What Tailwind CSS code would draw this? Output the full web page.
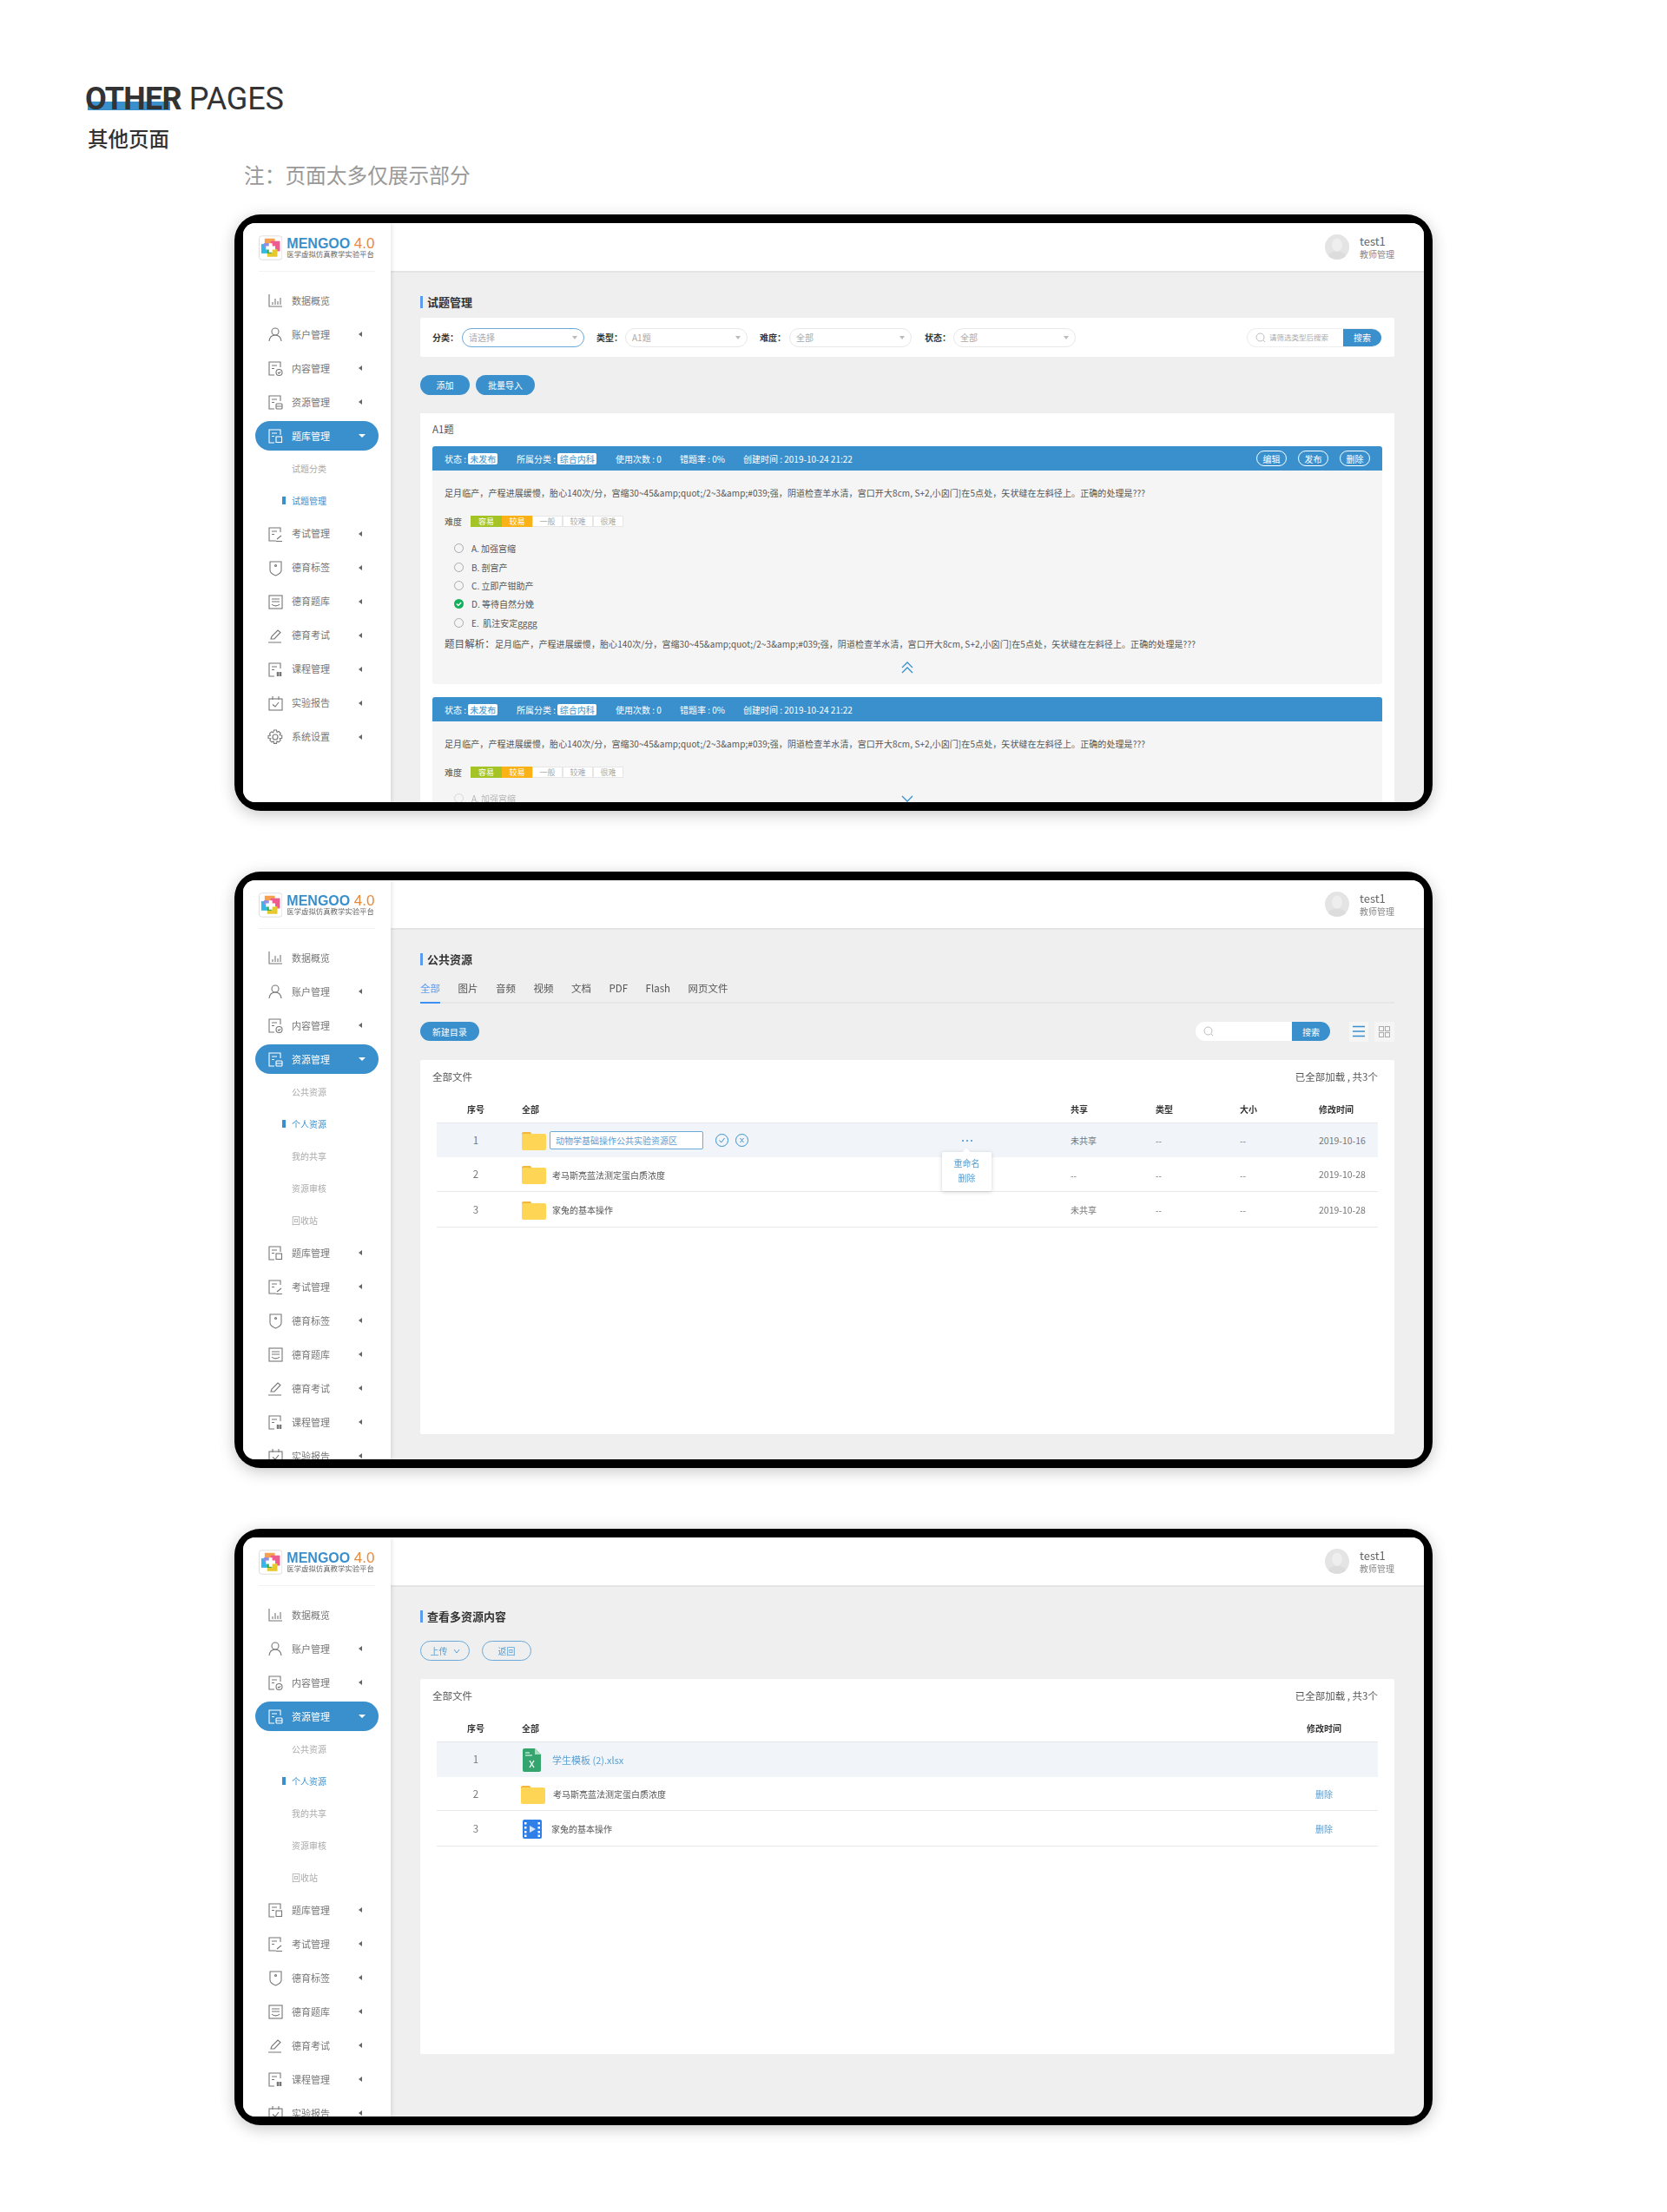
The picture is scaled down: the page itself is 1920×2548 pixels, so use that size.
<!DOCTYPE html>
<html lang="en">
<head>
<meta charset="UTF-8">
<title>Other pages</title>
<script src="https://cdn.jsdelivr.net/npm/@tailwindcss/browser@4"></script>
</head>
<body class="bg-white">
<div class="w-[1920px] h-[2548px] overflow-hidden font-['Noto_Sans_CJK_SC',sans-serif] text-[#555]">

  <!-- page heading -->
  <div class="h-[247px] pt-[92px] pl-[98px]">
    <div class="relative h-[44px] w-[300px] font-['Roboto',sans-serif] text-[36px] leading-[44px] text-[#333]">
      <div class="absolute left-[3px] top-[25px] w-[95px] h-[10px] bg-[#3a90cc]"></div>
      <span class="relative font-bold tracking-[-0.8px]">OTHER</span> <span class="relative tracking-[-0.2px]">PAGES</span>
    </div>
    <div class="ml-[3px] mt-[1px] text-[23.5px] leading-[44px] font-medium text-[#333]">其他页面</div>
    <div class="ml-[183px] -mt-[2px] text-[23.7px] leading-[44px] text-[#999]">注：页面太多仅展示部分</div>
  </div>

  <!-- question bank -->
  <div class="ml-[270px] w-[1380px] h-[687px] bg-black rounded-[30px] p-[10px] shadow-[0_4px_18px_rgba(0,0,0,0.22)]">
    <div class="flex h-full rounded-[14px] overflow-hidden bg-[#efefef] blur-[0.35px]">
      <div class="sidebar w-[170px] shrink-0 bg-white shadow-[1px_0_5px_rgba(0,0,0,0.12)] z-10" data-active="题库管理" data-subs="试题分类,试题管理" data-current="试题管理"></div>
      <div class="flex-1 min-w-0 flex flex-col">
        <div class="topbar"></div>
        <div class="relative flex-1 min-h-0 overflow-hidden px-[34px] pt-[27px]">
          <div class="h-[14px] border-l-[3px] border-[#5b9bf0] pl-[5px] text-[13px] leading-[14px] font-bold text-[#333]">试题管理</div>

          <div class="mt-[11px] h-[45px] bg-white rounded-[2px] flex items-center pl-[14px] text-[10px]">
            <span class="w-[34px] font-bold text-[#333]">分类：</span>
            <div class="w-[141px] h-[22px] mr-[14px] rounded-full border border-[#6aa9d8] flex items-center justify-between px-[7px] text-[#aaa]">请选择<i class="w-0 h-0 border-x-[3.5px] border-x-transparent border-t-[4px] border-t-[#bbb]"></i></div>
            <span class="w-[33px] font-bold text-[#333]">类型：</span>
            <div class="w-[141px] h-[22px] mr-[14px] rounded-full border border-[#e8e8e8] flex items-center justify-between px-[7px] text-[#aaa]">A1题<i class="w-0 h-0 border-x-[3.5px] border-x-transparent border-t-[4px] border-t-[#bbb]"></i></div>
            <span class="w-[34px] font-bold text-[#333]">难度：</span>
            <div class="w-[141px] h-[22px] mr-[15px] rounded-full border border-[#e8e8e8] flex items-center justify-between px-[7px] text-[#aaa]">全部<i class="w-0 h-0 border-x-[3.5px] border-x-transparent border-t-[4px] border-t-[#bbb]"></i></div>
            <span class="w-[33px] font-bold text-[#333]">状态：</span>
            <div class="w-[141px] h-[22px] rounded-full border border-[#e8e8e8] flex items-center justify-between px-[7px] text-[#aaa]">全部<i class="w-0 h-0 border-x-[3.5px] border-x-transparent border-t-[4px] border-t-[#bbb]"></i></div>
            <div class="ml-auto mr-[15px] w-[155px] h-[22px] flex rounded-full overflow-hidden border border-[#eee] border-r-0">
              <div class="flex-1 flex items-center pl-[9px] text-[8.5px] text-[#aaa]">
                <svg class="w-[12px] h-[12px] mr-[4px]" viewBox="0 0 12 12" fill="none" stroke="#bbb"><circle cx="5.5" cy="5.5" r="4.5"/><path d="M9 9l2 2"/></svg>请筛选类型后搜索
              </div>
              <div class="w-[44px] bg-[#3a90cc] text-white flex items-center justify-center">搜索</div>
            </div>
          </div>

          <div class="mt-[21px] flex gap-[7px] text-[10px] text-white">
            <div class="w-[57px] h-[23px] rounded-full bg-[#3a90cc] flex items-center justify-center">添加</div>
            <div class="w-[68px] h-[23px] rounded-full bg-[#3a90cc] flex items-center justify-center">批量导入</div>
          </div>

          <div class="mt-[21px] bg-white px-[14px] h-[500px]">
            <div class="h-[38px] flex items-center text-[11.5px] text-[#555]">A1题</div>

            <div class="qbar" data-actions="1"></div>
            <div class="h-[246px] bg-[#f5f5f5] rounded-b-[3px] px-[14px] pt-[16px] text-[10px] text-[#555]">
              <div class="h-[20px] leading-[20px] whitespace-nowrap tracking-[0.09px]">足月临产，产程进展缓慢，胎心140次/分，宫缩30~45&amp;amp;quot;/2~3&amp;amp;#039;强，阴道检查羊水清，宫口开大8cm, S+2,小囟门]在5点处，矢状缝在左斜径上。正确的处理是???</div>
              <div class="qlevel mt-[16px]"></div>
              <div class="mt-[14px]">
                <div class="h-[21.4px] flex items-center pl-[11px]"><i class="w-[11px] h-[11px] rounded-full border border-[#aaa] mr-[9px]"></i>A. 加强宫缩</div>
                <div class="h-[21.4px] flex items-center pl-[11px]"><i class="w-[11px] h-[11px] rounded-full border border-[#aaa] mr-[9px]"></i>B. 剖宫产</div>
                <div class="h-[21.4px] flex items-center pl-[11px]"><i class="w-[11px] h-[11px] rounded-full border border-[#aaa] mr-[9px]"></i>C. 立即产钳助产</div>
                <div class="h-[21.4px] flex items-center pl-[11px]">
                  <svg class="w-[11px] h-[11px] mr-[9px]" viewBox="0 0 11 11"><circle cx="5.5" cy="5.5" r="5.5" fill="#12b05c"/><path d="M2.8 5.6l2 2 3.4-3.6" fill="none" stroke="#fff" stroke-width="1.4"/></svg>D. 等待自然分娩</div>
                <div class="h-[21.4px] flex items-center pl-[11px]"><i class="w-[11px] h-[11px] rounded-full border border-[#aaa] mr-[9px]"></i>E.&nbsp; 肌注安定gggg</div>
              </div>
              <div class="mt-[3.5px] h-[20px] leading-[20px] whitespace-nowrap tracking-[0.09px]"><span class="text-[11.5px]">题目解析：</span>足月临产，产程进展缓慢，胎心140次/分，宫缩30~45&amp;amp;quot;/2~3&amp;amp;#039;强，阴道检查羊水清，宫口开大8cm, S+2,小囟门]在5点处，矢状缝在左斜径上。正确的处理是???</div>
              <svg class="block mx-auto mt-[11px] w-[14px] h-[14px]" viewBox="0 0 14 14" fill="none" stroke="#3a90cc" stroke-width="1.3"><path d="M1 7l6-6 6 6M1 13l6-6 6 6"/></svg>
            </div>

            <div class="mt-[15px] qbar"></div>
            <div class="relative h-[200px] bg-[#f5f5f5] px-[14px] pt-[16px] text-[10px]">
              <div class="h-[20px] leading-[20px] whitespace-nowrap tracking-[0.09px]">足月临产，产程进展缓慢，胎心140次/分，宫缩30~45&amp;amp;quot;/2~3&amp;amp;#039;强，阴道检查羊水清，宫口开大8cm, S+2,小囟门]在5点处，矢状缝在左斜径上。正确的处理是???</div>
              <div class="qlevel mt-[16px]"></div>
              <div class="mt-[13px] h-[21.4px] flex items-center pl-[11px] opacity-40"><i class="w-[11px] h-[11px] rounded-full border border-[#aaa] mr-[9px]"></i>A. 加强宫缩</div>
              <svg class="absolute left-[540px] top-[84px] w-[14px] h-[10px]" viewBox="0 0 14 10" fill="none" stroke="#3a90cc" stroke-width="1.3"><path d="M1 2l6 6 6-6"/></svg>
            </div>
          </div>
        </div>
      </div>
    </div>
  </div>

  <!-- public resources -->
  <div class="mt-[70px] ml-[270px] w-[1380px] h-[687px] bg-black rounded-[30px] p-[10px] shadow-[0_4px_18px_rgba(0,0,0,0.22)]">
    <div class="flex h-full rounded-[14px] overflow-hidden bg-[#efefef] blur-[0.35px]">
      <div class="sidebar w-[170px] shrink-0 bg-white shadow-[1px_0_5px_rgba(0,0,0,0.12)] z-10" data-active="资源管理" data-subs="公共资源,个人资源,我的共享,资源审核,回收站" data-current="个人资源"></div>
      <div class="flex-1 min-w-0 flex flex-col">
        <div class="topbar"></div>
        <div class="flex-1 min-h-0 overflow-hidden px-[34px] pt-[27px]">
          <div class="h-[14px] border-l-[3px] border-[#5b9bf0] pl-[5px] text-[13px] leading-[14px] font-bold text-[#333]">公共资源</div>

          <div class="mt-[12px] h-[32px] border-b-2 border-[#e6e6e6] flex gap-[20.5px] text-[11.5px] text-[#555]">
            <div class="h-[32px] border-b-2 border-[#3d8ff0] leading-[29px] text-[#5b9bf0]">全部</div>
            <div class="leading-[29px]">图片</div>
            <div class="leading-[29px]">音频</div>
            <div class="leading-[29px]">视频</div>
            <div class="leading-[29px]">文档</div>
            <div class="leading-[29px]">PDF</div>
            <div class="leading-[29px]">Flash</div>
            <div class="leading-[29px]">网页文件</div>
          </div>

          <div class="mt-[21px] h-[22px] flex items-center text-[10px]">
            <div class="w-[68px] h-[22px] rounded-full bg-[#3a90cc] text-white flex items-center justify-center">新建目录</div>
            <div class="ml-auto w-[155px] h-[22px] flex rounded-full overflow-hidden bg-white">
              <div class="flex-1 flex items-center pl-[9px]">
                <svg class="w-[12px] h-[12px]" viewBox="0 0 12 12" fill="none" stroke="#bbb"><circle cx="5.5" cy="5.5" r="4.5"/><path d="M9 9l2 2"/></svg>
              </div>
              <div class="w-[44px] bg-[#3a90cc] text-white flex items-center justify-center">搜索</div>
            </div>
            <div class="ml-[22px] w-[22px] h-[23px] bg-[#f5f5f5] flex items-center justify-center">
              <svg class="w-[14px] h-[14px]" viewBox="0 0 14 14" stroke="#3a90cc" stroke-width="1.4"><path d="M0 1.5h14M0 7h14M0 12.5h14"/></svg>
            </div>
            <div class="ml-[7px] w-[23px] h-[23px] bg-[#f5f5f5] flex items-center justify-center">
              <svg class="w-[13px] h-[13px]" viewBox="0 0 13 13" fill="none" stroke="#aaa"><rect x="0.5" y="0.5" width="5" height="5"/><rect x="7.5" y="0.5" width="5" height="5"/><rect x="0.5" y="7.5" width="5" height="5"/><rect x="7.5" y="7.5" width="5" height="5"/></svg>
            </div>
          </div>

          <div class="mt-[22px] h-[431px] bg-white rounded-[2px]">
            <div class="h-[72px] px-[14px] pr-[19px] pt-[8px] flex justify-between items-start text-[11.5px] leading-[22px] text-[#555]">
              <span>全部文件</span><span>已全部加载 , 共3个</span>
            </div>
            <div class="mx-[19px] text-[10px]">
              <div class="grid grid-cols-[90px_640px_98px_97px_91px_68px] h-[0px] relative -top-[15px] font-bold text-[#333] leading-[0px]">
                <div class="text-center">序号</div><div class="pl-[8px]">全部</div><div>共享</div><div>类型</div><div>大小</div><div>修改时间</div>
              </div>
              <div class="relative grid grid-cols-[90px_640px_98px_97px_91px_68px] items-center h-[40px] bg-[#f1f5f9] border-t border-[#e6e9ec] text-[#777]">
                <div class="text-center text-[11.5px]">1</div>
                <div class="pl-[8px] flex items-center">
                  <svg class="w-[28px] h-[22px]" viewBox="0 0 28 22"><path d="M0 3a2 2 0 0 1 2-2h8l2 3H0z" fill="#f3b63e"/><rect y="3" width="28" height="19" rx="2" fill="#ffd555"/></svg>
                  <div class="ml-[4px] w-[177px] h-[21px] rounded-[2px] border border-[#6aa9d8] bg-white pl-[6px] leading-[19px] text-[#5aa0d4]">动物学基础操作公共实验资源区</div>
                  <svg class="ml-[14px] w-[15px] h-[15px]" viewBox="0 0 15 15" fill="none" stroke="#3a90cc"><circle cx="7.5" cy="7.5" r="7"/><path d="M4.5 7.5l2.2 2.5 3.8-5"/></svg>
                  <svg class="ml-[8px] w-[15px] h-[15px]" viewBox="0 0 15 15" fill="none" stroke="#3a90cc"><circle cx="7.5" cy="7.5" r="7"/><path d="M5.5 5l4 5M9.5 5l-4 5"/></svg>
                </div>
                <div>未共享</div><div>--</div><div>--</div><div class="text-[10.5px]">2019-10-16</div>
                <div class="absolute left-[605px] top-[19px] flex gap-[3px]"><i class="w-[2px] h-[2px] rounded-full bg-[#3a90cc]"></i><i class="w-[2px] h-[2px] rounded-full bg-[#3a90cc]"></i><i class="w-[2px] h-[2px] rounded-full bg-[#3a90cc]"></i></div>
                <div class="absolute z-20 left-[582px] top-[33px] w-[57px] h-[45px] bg-white rounded-[2px] shadow-[0_1px_5px_rgba(0,0,0,0.18)] text-center text-[10px] leading-[17px] pt-[4px] text-[#5aa0d4]">
                  <i class="absolute left-[25px] -top-[3px] w-[6px] h-[6px] rotate-45 bg-white"></i>
                  <div>重命名</div><div>删除</div>
                </div>
              </div>
              <div class="grid grid-cols-[90px_640px_98px_97px_91px_68px] items-center h-[40px] pt-[1px] border-b border-[#e8e8e8] text-[#777]">
                <div class="text-center text-[11.5px]">2</div>
                <div class="pl-[8px] flex items-center">
                  <svg class="w-[28px] h-[22px]" viewBox="0 0 28 22"><path d="M0 3a2 2 0 0 1 2-2h8l2 3H0z" fill="#f3b63e"/><rect y="3" width="28" height="19" rx="2" fill="#ffd555"/></svg>
                  <span class="ml-[7px] text-[#555]">考马斯亮蓝法测定蛋白质浓度</span>
                </div>
                <div>--</div><div>--</div><div>--</div><div class="text-[10.5px]">2019-10-28</div>
              </div>
              <div class="grid grid-cols-[90px_640px_98px_97px_91px_68px] items-center h-[41px] pt-[1px] border-b border-[#e8e8e8] text-[#777]">
                <div class="text-center text-[11.5px]">3</div>
                <div class="pl-[8px] flex items-center">
                  <svg class="w-[28px] h-[22px]" viewBox="0 0 28 22"><path d="M0 3a2 2 0 0 1 2-2h8l2 3H0z" fill="#f3b63e"/><rect y="3" width="28" height="19" rx="2" fill="#ffd555"/></svg>
                  <span class="ml-[7px] text-[#555]">家兔的基本操作</span>
                </div>
                <div>未共享</div><div>--</div><div>--</div><div class="text-[10.5px]">2019-10-28</div>
              </div>
            </div>
          </div>
        </div>
      </div>
    </div>
  </div>

  <!-- multi resource content -->
  <div class="mt-[70px] ml-[270px] w-[1380px] h-[687px] bg-black rounded-[30px] p-[10px] shadow-[0_4px_18px_rgba(0,0,0,0.22)]">
    <div class="flex h-full rounded-[14px] overflow-hidden bg-[#efefef] blur-[0.35px]">
      <div class="sidebar w-[170px] shrink-0 bg-white shadow-[1px_0_5px_rgba(0,0,0,0.12)] z-10" data-active="资源管理" data-subs="公共资源,个人资源,我的共享,资源审核,回收站" data-current="个人资源"></div>
      <div class="flex-1 min-w-0 flex flex-col">
        <div class="topbar"></div>
        <div class="flex-1 min-h-0 overflow-hidden px-[34px] pt-[27px]">
          <div class="h-[14px] border-l-[3px] border-[#5b9bf0] pl-[5px] text-[13px] leading-[14px] font-bold text-[#333]">查看多资源内容</div>

          <div class="mt-[21px] flex gap-[14px] text-[10px] text-[#5aa0d4]">
            <div class="w-[57px] h-[23px] rounded-full border border-[#6aa9d8] flex items-center justify-center">上传
              <svg class="ml-[6px] w-[8px] h-[6px]" viewBox="0 0 8 6" fill="none" stroke="#5aa0d4"><path d="M1 1l3 4 3-4"/></svg>
            </div>
            <div class="w-[57px] h-[23px] rounded-full border border-[#6aa9d8] flex items-center justify-center">返回</div>
          </div>

          <div class="mt-[21px] h-[432px] bg-white rounded-[2px]">
            <div class="h-[72px] px-[14px] pr-[19px] pt-[8px] flex justify-between items-start text-[11.5px] leading-[22px] text-[#555]">
              <span>全部文件</span><span>已全部加载 , 共3个</span>
            </div>
            <div class="mx-[19px] text-[10px]">
              <div class="grid grid-cols-[90px_1fr_82px] h-[0px] relative -top-[15px] font-bold text-[#333] leading-[0px]">
                <div class="text-center">序号</div><div class="pl-[8px]">全部</div><div>修改时间</div>
              </div>
              <div class="grid grid-cols-[90px_1fr_82px] items-center h-[41px] bg-[#f1f5f9] border-t border-[#e6e9ec] text-[#777]">
                <div class="text-center text-[11.5px]">1</div>
                <div class="pl-[8px] flex items-center">
                  <svg class="w-[22px] h-[28px] ml-[1px]" viewBox="0 0 22 28"><path d="M2 1h12l7 7v18a2 2 0 0 1-2 2H2a2 2 0 0 1-2-2V3a2 2 0 0 1 2-2z" fill="#34a56f"/><path d="M14 1l7 7h-7z" fill="#a5e0bd"/><path d="M3 6h5M3 9h8" stroke="#fff" stroke-width="1"/><path d="M8 15l5 8M13 15l-5 8" stroke="#fff" stroke-width="1.3"/></svg>
                  <span class="ml-[12px] text-[11px] text-[#5aa0d4]">学生模板 (2).xlsx</span>
                </div>
                <div></div>
              </div>
              <div class="grid grid-cols-[90px_1fr_82px] items-center h-[39px] pt-[1px] border-b border-[#e8e8e8] text-[#777]">
                <div class="text-center text-[11.5px]">2</div>
                <div class="pl-[7px] flex items-center">
                  <svg class="w-[28px] h-[22px]" viewBox="0 0 28 22"><path d="M0 3a2 2 0 0 1 2-2h8l2 3H0z" fill="#f3b63e"/><rect y="3" width="28" height="19" rx="2" fill="#ffd555"/></svg>
                  <span class="ml-[9px] text-[#555]">考马斯亮蓝法测定蛋白质浓度</span>
                </div>
                <div class="pl-[10px] text-[#5aa0d4]">删除</div>
              </div>
              <div class="grid grid-cols-[90px_1fr_82px] items-center h-[41px] pt-[1px] border-b border-[#e8e8e8] text-[#777]">
                <div class="text-center text-[11.5px]">3</div>
                <div class="pl-[9px] flex items-center">
                  <svg class="w-[22px] h-[22px]" viewBox="0 0 22 22"><rect width="22" height="22" rx="2" fill="#2f7fe8"/><rect x="2" y="3" width="2.5" height="2.5" fill="#fff"/><rect x="2" y="8" width="2.5" height="2.5" fill="#fff"/><rect x="2" y="13" width="2.5" height="2.5" fill="#fff"/><rect x="2" y="17.5" width="2.5" height="2.5" fill="#fff"/><rect x="17.5" y="3" width="2.5" height="2.5" fill="#fff"/><rect x="17.5" y="8" width="2.5" height="2.5" fill="#fff"/><rect x="17.5" y="13" width="2.5" height="2.5" fill="#fff"/><rect x="17.5" y="17.5" width="2.5" height="2.5" fill="#fff"/><path d="M8 7l7 4-7 4z" fill="#cfe3ff"/></svg>
                  <span class="ml-[11px] text-[#555]">家兔的基本操作</span>
                </div>
                <div class="pl-[10px] text-[#5aa0d4]">删除</div>
              </div>
            </div>
          </div>
        </div>
      </div>
    </div>
  </div>
</div>

<script>
  // sidebar icons, stroke follows the row's text colour
  const docBase = 'M16 9V3H3v15h6M6 7h6M6 10.5h3';
  const icons = {
    '数据概览': '<path d="M3 3v14h15M7 15v-3M10 15V8M13 15v-4M16 15V7"/>',
    '账户管理': '<circle cx="10" cy="7" r="4"/><path d="M3 18c.6-5 3.5-7 7-7s6.400 2 7 7"/>',
    '内容管理': `<path d="${docBase}"/><circle cx="14.500" cy="15" r="3.500"/><path d="M13 15l1.200 1.200 2-2"/>`,
    '资源管理': `<path d="${docBase}"/><rect x="11" y="12" width="7" height="6" rx="1"/><path d="M11 15h7"/>`,
    '题库管理': `<path d="${docBase}"/><rect x="11" y="11" width="6.500" height="6.500"/>`,
    '考试管理': '<path d="M16 8V3H3v15h8M6 7h6M6 10.500h3M12 16l5-4M11 18.500h7"/>',
    '德育标签': '<path d="M4 3h13v10c0 3-3 4.500-6.500 6C7 17.500 4 16 4 13z"/><circle cx="10.500" cy="7.500" r="1"/>',
    '德育题库': '<rect x="3" y="3" width="15" height="15"/><path d="M6 7h9M6 10h9M6 13c2 2.500 7 2.500 9 0"/>',
    '德育考试': '<path d="M2 18h15M5 14l1-3 7-7 3 2.500-7 7.500z"/>',
    '课程管理': `<path d="${docBase}"/><path d="M13 13v5M16 13v5" stroke-width="2.500"/>`,
    '实验报告': '<rect x="3" y="5" width="15" height="13"/><path d="M7 2v4M14 2v4M7 11.500l3 2.500 4-5"/>',
    '系统设置': '<circle cx="10" cy="10" r="3"/><path d="M8.500 2h3l.5 2.500 2-1 2.200 2.200-1 2 2.500.5v3l-2.500.5 1 2-2.200 2.200-2-1-.5 2.500h-3l-.5-2.500-2 1-2.200-2.200 1-2L2 11.500v-3l2.500-.5-1-2 2.200-2.200 2 1z"/>'
  };

  document.querySelectorAll('.sidebar').forEach(el => {
    const subs = el.dataset.subs.split(',');
    let html = `
      <div class="h-[56px] mx-[18px] border-b border-[#f2f2f2] flex items-center">
        <svg class="w-[28px] h-[29px] mt-[1px]" viewBox="0 0 28 29">
          <rect x="0.500" y="0.500" width="27" height="28" rx="3" fill="#fff" stroke="#ddd"/>
          <rect x="7" y="3.500" width="12" height="10" fill="#f6a04d"/>
          <rect x="14" y="6.500" width="11" height="12" fill="#ee5b8e"/>
          <rect x="3" y="10" width="11" height="11" fill="#35b7e8"/>
          <rect x="10" y="16" width="12" height="9" fill="#e6c92e"/>
          <rect x="10" y="15" width="5" height="6" fill="#2aa84a"/>
          <rect x="6" y="9" width="6" height="5" fill="#8f8fe6"/>
          <path d="M12 9h4v3.500h3.500v4H16V20h-4v-3.500H8.500v-4H12z" fill="#fff"/>
        </svg>
        <div class="ml-[5px] w-[104px] leading-none">
          <div class="font-['Liberation_Sans',sans-serif] text-[16px] h-[16px] whitespace-nowrap text-[#3a90cc] font-bold">MENGOO <span class="font-normal text-[17px] text-[#e88a3c]">4.0</span></div>
          <div class="text-[8.400px] h-[10px] whitespace-nowrap text-[#666]">医学虚拟仿真教学实验平台</div>
        </div>
      </div>
      <div class="pt-[13.500px] text-[11px]">`;
    Object.keys(icons).forEach(name => {
      const active = name === el.dataset.active;
      const pill = active
        ? 'bg-[#3a90cc] text-white'
        : 'text-[#777]';
      const arrow = active
        ? '<i class="w-0 h-0 border-x-[4px] border-x-transparent border-t-[4px] border-t-white"></i>'
        : '<i class="w-0 h-0 border-y-[3.500px] border-y-transparent border-r-[4px] border-r-[#666]"></i>';
      const arrowBox = name === '数据概览' ? '' : arrow;
      html += `<div class="h-[39px] flex items-center">
        <div class="ml-[14px] w-[142px] h-[34px] rounded-full flex items-center pl-[13px] ${pill}">
          <svg class="w-[20px] h-[20px] shrink-0" viewBox="0 0 20 20" fill="none" stroke="currentColor" stroke-width="1.100">${icons[name]}</svg>
          <span class="ml-[9px] w-[77px]">${name}</span>${arrowBox}
        </div></div>`;
      if (active) {
        subs.forEach(sub => {
          const cur = sub === el.dataset.current;
          html += `<div class="h-[36.800px] flex items-center text-[10px] ${cur ? 'text-[#3a90cc]' : 'text-[#aaa]'}">
            <i class="ml-[45px] w-[4px] h-[9px] mr-[7px] ${cur ? 'bg-[#3a90cc]' : ''}"></i>${sub}</div>`;
        });
      }
    });
    el.innerHTML = html + '</div>';
  });

  document.querySelectorAll('.topbar').forEach(el => {
    el.innerHTML = `
      <div class="h-[57px] bg-white border-b-2 border-[#e4e4e4] flex items-center justify-end pr-[34px]">
        <svg class="w-[28px] h-[29px]" viewBox="0 0 28 29"><ellipse cx="14" cy="14.500" rx="14" ry="14.500" fill="#e4e4e4"/><ellipse cx="14" cy="12" rx="6" ry="7.500" fill="#eee"/><path d="M4 25c2-5 6-5 10-5s8 0 10 5c-5 5-15 5-20 0z" fill="#dcdcdc"/></svg>
        <div class="ml-[12px] w-[40px] whitespace-nowrap">
          <div class="text-[13px] leading-[16px] text-[#666]">test1</div>
          <div class="text-[10px] leading-[14px] text-[#888]">教师管理</div>
        </div>
      </div>`;
  });

  document.querySelectorAll('.qbar').forEach(el => {
    const actions = el.dataset.actions ? `
      <div class="ml-auto mr-[14px] flex gap-[13px]">
        <div class="w-[35px] h-[18px] rounded-full border border-white flex items-center justify-center">编辑</div>
        <div class="w-[35px] h-[18px] rounded-full border border-white flex items-center justify-center">发布</div>
        <div class="w-[35px] h-[18px] rounded-full border border-white flex items-center justify-center">删除</div>
      </div>` : '';
    el.innerHTML = `
      <div class="h-[28px] bg-[#3a90cc] rounded-t-[3px] flex items-center pl-[14px] text-[10px] text-white whitespace-nowrap">
        <div class="w-[83px] flex items-center">状态 :&nbsp;<span class="w-[34px] h-[13px] leading-[13px] text-center bg-white text-[#3a90cc] rounded-[2px]">未发布</span></div>
        <div class="w-[114px] flex items-center">所属分类 :&nbsp;<span class="w-[45px] h-[13px] leading-[13px] text-center bg-white text-[#3a90cc] rounded-[2px]">综合内科</span></div>
        <div class="w-[74px]">使用次数 : 0</div>
        <div class="w-[73px]">错题率 : 0%</div>
        <div>创建时间 : 2019-10-24 21:22</div>
        ${actions}
      </div>`;
  });

  document.querySelectorAll('.qlevel').forEach(el => {
    el.innerHTML = `
      <div class="flex items-center h-[13px] text-[9px] text-[#aaa]">
        <span class="w-[30px] text-[10px] text-[#555]">难度</span>
        <span class="w-[36px] h-[13px] leading-[13px] text-center bg-[#a4c425] text-white">容易</span>
        <span class="w-[35px] h-[13px] leading-[13px] text-center bg-[#fbb216] text-white">较易</span>
        <span class="w-[35px] h-[13px] leading-[12px] text-center bg-white border border-[#e6e6e6]">一般</span>
        <span class="w-[35px] h-[13px] leading-[12px] text-center bg-white border border-[#e6e6e6]">较难</span>
        <span class="w-[35px] h-[13px] leading-[12px] text-center bg-white border border-[#e6e6e6]">很难</span>
      </div>`;
  });
</script>
</body>
</html>
